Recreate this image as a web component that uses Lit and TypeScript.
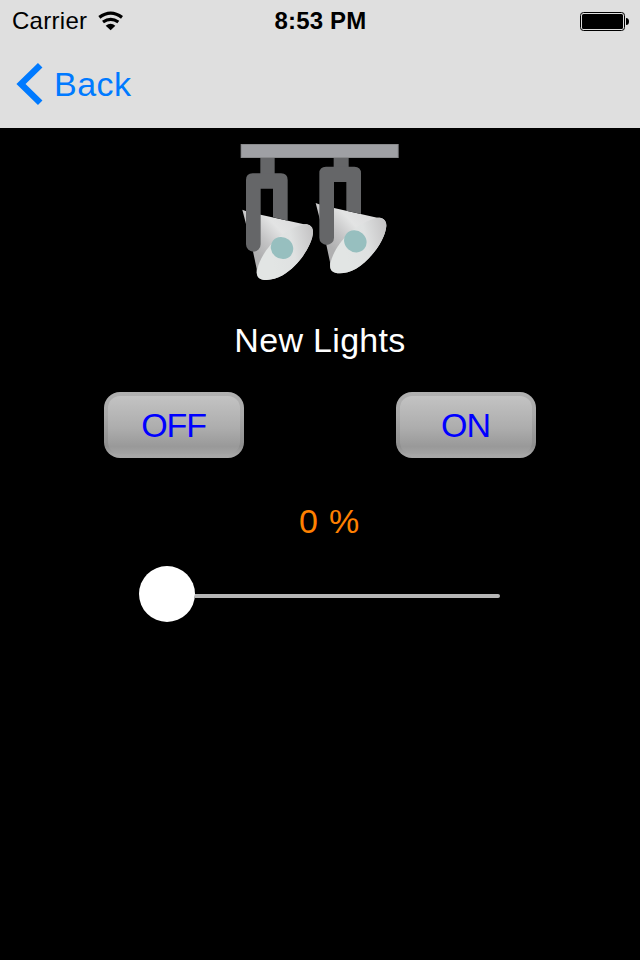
import { LitElement, html, css, svg } from "lit";
import { customElement, property, state } from "lit/decorators.js";

const lamp = (dx: number, dy: number) => svg`
  <g transform="translate(${dx} ${dy})">
    <path d="M37 341 L47 345 L92 356 L222 385 C238 384 249 391 249 409 C247 448 205 510 158 538 C130 554 98 556 86 545 C79 538 80 528 80 518 L68 462 Z" fill="url(#shade)"/>
    <path d="M81 522 C94 465 151 402 222 385 C238 384 249 391 249 409 C247 448 205 510 158 538 C130 554 98 556 86 545 C80 539 80 530 81 522 Z" fill="url(#rim)"/>
    <path d="M48 252 Q48 232 68 232 H153 Q173 232 173 252 V374 L129 364 V278 H92 V445 A22 22 0 0 1 48 445 Z" fill="#656668"/>
    <ellipse cx="156" cy="456" rx="35" ry="32" transform="rotate(40 156 456)" fill="#97bfbf"/>
  </g>`;

@customElement("push-button")
class PushButton extends LitElement {
  @property() label = "";

  static styles = css`
    :host { display: block; }
    button {
      display: block;
      width: 140px;
      height: 66px;
      padding: 0 1px 0 0;
      border: 4px solid transparent;
      border-radius: 16px;
      background:
        linear-gradient(#c3c3c3 0%, #adadad 55%, #999 87%, #a3a3a3 100%) padding-box,
        linear-gradient(#b1b1b1 0%, #a9a9a9 35%, #8e8e8e 82%, #a6a6a6 95%, #a8a8a8 100%) border-box;
      color: #00f;
      font: 34px/58px "Liberation Sans", Arial, sans-serif;
      letter-spacing: -1.1px;
    }
  `;

  render() {
    return html`<button>${this.label}</button>`;
  }
}

@customElement("app-root")
class AppRoot extends LitElement {
  @state() private level = 0;

  static styles = css`
    :host {
      display: flex;
      flex-direction: column;
      align-items: center;
      box-sizing: border-box;
      width: 640px;
      height: 960px;
      overflow: hidden;
      background: #000;
      font-family: "Liberation Sans", Arial, sans-serif;
    }
    svg { display: block; }
    header {
      width: 640px;
      height: 128px;
      background: #dfdfdf;
    }
    .status {
      display: grid;
      grid-template-columns: 1fr auto 1fr;
      align-items: center;
      height: 40px;
      box-sizing: border-box;
      padding: 1px 11px 0 12px;
      font-size: 24px;
      line-height: 40px;
      color: #000;
    }
    .carrier { display: flex; align-items: center; gap: 11px; letter-spacing: 0.28px; }
    .time { font-weight: bold; letter-spacing: 0.15px; }
    .battery { justify-self: end; }
    .nav {
      display: flex;
      align-items: center;
      height: 88px;
      padding-left: 16px;
      box-sizing: border-box;
      gap: 11px;
      color: #007aff;
      font-size: 34px;
      letter-spacing: 0.5px;
    }
    .lights { margin-top: 15px; }
    .name {
      margin-top: 37px;
      height: 40px;
      line-height: 40px;
      font-size: 34px;
      letter-spacing: 0.32px;
      color: #fff;
    }
    .buttons { display: flex; gap: 152px; margin-top: 32px; }
    .level {
      margin: 43px 0 0 19px;
      height: 40px;
      line-height: 40px;
      font-size: 34px;
      letter-spacing: 0.8px;
      color: #ff8000;
    }
    .slider {
      display: flex;
      align-items: center;
      width: 361px;
      height: 56px;
      margin: 25px 1px 0 0;
    }
    .knob {
      flex: none;
      width: 56px;
      height: 56px;
      border-radius: 50%;
      background: #fff;
    }
    .track {
      flex: 1;
      height: 4px;
      margin-top: 4px;
      border-radius: 0 2px 2px 0;
      background: #b6b6b6;
    }
  `;

  render() {
    return html`
      <header>
        <div class="status">
          <div class="carrier">
            <span>Carrier</span>
            <svg width="26" height="20" viewBox="294 30 78 60">
              <g fill="none" stroke="#000" stroke-width="10">
                <path d="M298 49 Q332 24 366 49"/>
                <path d="M309 63 Q332 47 355 63"/>
              </g>
              <path d="M317 74 Q332 62 346 74 L332 88 Z"/>
            </svg>
          </div>
          <span class="time">8:53 PM</span>
          <svg class="battery" width="49" height="20" viewBox="0 0 49 20">
            <rect x="0.5" y="1.5" width="44" height="18" rx="3" fill="none" stroke="#000"/>
            <rect x="2" y="3" width="41" height="15" rx="1.5"/>
            <path d="M46 7 Q49 7 49 10.5 Q49 14 46 14 Z"/>
          </svg>
        </div>
        <div class="nav">
          <svg width="27" height="44" viewBox="0 0 27 44">
            <path d="M24.2 3.2 L5 22 L24.2 40.8" fill="none" stroke="#007aff" stroke-width="6.4"/>
          </svg>
          <span>Back</span>
        </div>
      </header>
      <svg class="lights" width="160" height="140" viewBox="30 141 480 420">
        <defs>
          <linearGradient id="shade" gradientUnits="userSpaceOnUse" x1="80" y1="470" x2="190" y2="370">
            <stop offset="0" stop-color="#b0b0b1"/>
            <stop offset="0.3" stop-color="#c4c4c5"/>
            <stop offset="0.65" stop-color="#e3e4e4"/>
            <stop offset="1" stop-color="#dcdcdd"/>
          </linearGradient>
          <linearGradient id="rim" gradientUnits="userSpaceOnUse" x1="110" y1="420" x2="245" y2="390">
            <stop offset="0" stop-color="#e2e5e4"/>
            <stop offset="0.5" stop-color="#dfe1e1"/>
            <stop offset="1" stop-color="#c4c3c4"/>
          </linearGradient>
        </defs>
        <path d="M91 184 H134 V236 H91 Z M311 184 H356 V216 H311 Z" fill="#656668"/>
        <rect x="32" y="144" width="474" height="42" fill="#898a8c"/>
        <rect x="35" y="147" width="468" height="36" fill="#9fa0a4"/>
        ${lamp(0, 0)} ${lamp(220, -20)}
      </svg>
      <div class="name">New Lights</div>
      <div class="buttons">
        <push-button label="OFF"></push-button>
        <push-button label="ON"></push-button>
      </div>
      <div class="level">${this.level} %</div>
      <div class="slider"><div class="knob"></div><div class="track"></div></div>
    `;
  }
}
